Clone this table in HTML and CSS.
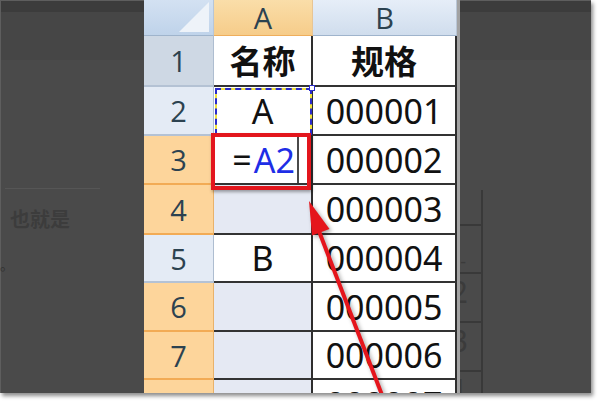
FILE: index.html
```html
<!DOCTYPE html>
<html lang="zh-CN">
<head>
<meta charset="utf-8">
<title>Excel 引用示例</title>
<link rel="stylesheet" href="styles.css">
</head>
<body>
<div class="canvas">
  <div class="photo">
    <div class="left-doc">
      <div class="doc-rule"></div>
      <div class="doc-text">也就是</div>
      <div class="doc-dot">。</div>
    </div>
    <div class="sheet">
      <div class="grid">
        <div class="corner"><span class="corner-tri"></span></div>
        <div class="colh colh-sel">A</div>
        <div class="colh">B</div>

        <div class="rowh rowh-dim">1</div>
        <div class="cell cell-a bold">名称</div>
        <div class="cell cell-b bold">规格</div>

        <div class="rowh">2</div>
        <div class="cell cell-a ants">A<span class="handle"></span></div>
        <div class="cell cell-b">000001</div>

        <div class="rowh rowh-sel">3</div>
        <div class="cell cell-a edit"><span class="eq">=</span><span class="ref">A2</span><span class="caret"></span></div>
        <div class="cell cell-b">000002</div>

        <div class="rowh rowh-sel">4</div>
        <div class="cell cell-a cell-sel"></div>
        <div class="cell cell-b">000003</div>

        <div class="rowh">5</div>
        <div class="cell cell-a">B</div>
        <div class="cell cell-b">000004</div>

        <div class="rowh rowh-sel">6</div>
        <div class="cell cell-a cell-sel"></div>
        <div class="cell cell-b">000005</div>

        <div class="rowh rowh-sel">7</div>
        <div class="cell cell-a cell-sel"></div>
        <div class="cell cell-b">000006</div>

        <div class="rowh rowh-sel">8</div>
        <div class="cell cell-a cell-sel"></div>
        <div class="cell cell-b">000007</div>
      </div>
    </div>
    <div class="right-doc">
      <div class="rtable">
        <div class="rrow rrow-1"></div>
        <div class="rrow rrow-2"><span class="dash">-</span></div>
        <div class="rrow rrow-3">2</div>
        <div class="rrow rrow-4">3</div>
        <div class="rrow rrow-5">1</div>
      </div>
    </div>
    <div class="red-box"></div>
    <svg class="arrow" width="591" height="393" viewBox="0 0 591 393" aria-hidden="true">
      <line x1="382" y1="395" x2="317" y2="226" stroke="#e5151c" stroke-width="4"/>
      <polygon points="309,201 329.5,229 312,235.5" fill="#e5151c"/>
    </svg>
  </div>
</div>
</body>
</html>
```

FILE: styles.css
```css
* {
  box-sizing: border-box;
}

html, body {
  margin: 0;
  padding: 0;
  background: #ffffff;
}

.canvas {
  width: 600px;
  height: 404px;
  background: #ffffff;
  overflow: hidden;
}

.photo {
  position: relative;
  width: 591px;
  height: 393px;
  display: flex;
  overflow: hidden;
  background: linear-gradient(to bottom,
    #5e5e5e 0, #5e5e5e 1px,
    #3c3c3c 1px, #3c3c3c 12px,
    #464646 12px, #464646 60px,
    #4a4a4a 60px);
  box-shadow: inset 1px 0 0 #5e5e5e, 2px 3px 4px rgba(0, 0, 0, 0.45);
}

/* faint document behind, left side */
.left-doc {
  width: 144px;
  flex: none;
  padding-top: 188px;
  display: flex;
  flex-direction: column;
}

.doc-rule {
  margin-left: 5px;
  width: 95px;
  height: 1px;
  background: #565656;
}

.doc-text {
  margin: 18px 0 0 10px;
  font-family: "Noto Sans CJK SC", sans-serif;
  font-weight: 700;
  font-size: 20px;
  line-height: 24px;
  color: #3c3c3c;
}

.doc-dot {
  margin: 26px 0 0 0;
  font-family: "Noto Sans CJK SC", sans-serif;
  font-size: 14px;
  line-height: 14px;
  color: #333333;
}

/* spreadsheet */
.sheet {
  width: 316px;
  flex: none;
  height: 393px;
  overflow: hidden;
  border-right: 3px solid #a2a2a2;
  background: #ffffff;
}

.grid {
  display: grid;
  grid-template-columns: 70px 99px 144px;
  grid-template-rows: 36px 51px 49px 49px 50px 48px 49px 48px 49px;
}

.corner {
  position: relative;
  background: linear-gradient(to bottom, #d3e1f2, #bfd3ea);
  border-right: 1px solid #b7c6d8;
  border-bottom: 1px solid #9fb4cc;
}

.corner-tri {
  position: absolute;
  right: 4px;
  bottom: 3px;
  width: 0;
  height: 0;
  border-left: 30px solid transparent;
  border-bottom: 30px solid #eef3f9;
}

.colh {
  display: flex;
  align-items: center;
  justify-content: center;
  font-family: "Open Sans", "Noto Sans", sans-serif;
  font-size: 29px;
  line-height: 1;
  color: #2c4250;
  background: linear-gradient(to bottom, #e6eef8, #d0dded);
  border-right: 1px solid #b9c6d6;
  border-bottom: 1px solid #9fb4cc;
}

.colh-sel {
  background: linear-gradient(to bottom, #fadea9, #f6cc8a);
  border-bottom-color: #efae5c;
  border-right-color: #e8c594;
}

.rowh {
  display: flex;
  align-items: center;
  justify-content: center;
  font-family: "Open Sans", "Noto Sans", sans-serif;
  font-size: 29px;
  line-height: 1;
  color: #2c4250;
  background: #e4ebf5;
  border-right: 1px solid #aebdd0;
  border-bottom: 2px solid #b4c2d4;
}

.rowh-dim {
  background: #ced8e4;
}

.rowh-sel {
  background: #fdd59b;
  border-bottom-color: #f2ab55;
  border-right-color: #e9b26a;
}

.cell {
  position: relative;
  display: flex;
  align-items: center;
  justify-content: center;
  font-family: "Noto Sans", "Noto Sans CJK SC", sans-serif;
  font-size: 34px;
  line-height: 1;
  color: #111111;
  background: #ffffff;
  border-bottom: 2px solid #333333;
}

.cell-a {
  border-right: 2px solid #2e2e2e;
}

.cell-b {
  border-right: 2px solid #2e2e2e;
}

.cell-sel {
  background: #e5e9f3;
}

.bold {
  font-family: "Noto Sans CJK SC", sans-serif;
  font-weight: 700;
  font-size: 33px;
}

/* marching ants around A2 */
.ants::before,
.ants::after {
  content: "";
  position: absolute;
  left: 1px;
  top: 1px;
  right: -1px;
  bottom: -1px;
  pointer-events: none;
}

.ants::before {
  border: 2px solid #efe23a;
}

.ants::after {
  border: 2px dashed #2b2bcc;
}

.handle {
  position: absolute;
  right: -4px;
  top: -2px;
  width: 6px;
  height: 6px;
  background: #ffffff;
  border: 1px solid #2b2bcc;
  z-index: 1;
}

/* edited cell A3 */
.edit {
  justify-content: flex-end;
  padding-right: 12px;
  font-size: 34px;
}

.eq {
  color: #111111;
  margin-right: 2px;
}

.ref {
  color: #1e2ee6;
}

.caret {
  display: inline-block;
  width: 2px;
  height: 46px;
  margin-left: 2px;
  background: #4a4a4a;
}

/* faint document behind, right side */
.right-doc {
  flex: 1;
  padding-top: 190px;
}

.rtable {
  width: 23px;
  border-right: 2px solid #393939;
}

.rrow {
  overflow: hidden;
  display: flex;
  justify-content: flex-end;
  align-items: flex-start;
  padding-right: 13px;
  font-family: "Noto Sans", sans-serif;
  font-size: 30px;
  line-height: 36px;
  color: #3b3b3b;
  border-bottom: 2px solid #393939;
  white-space: nowrap;
}

.rrow-1 { height: 36px; }
.rrow-2 { height: 48px; align-items: flex-end; }
.rrow-3 { height: 49px; }
.rrow-4 { height: 49px; }
.rrow-5 { height: 49px; border-bottom: none; }

.dash {
  font-size: 18px;
  line-height: 22px;
  padding-right: 2px;
}

/* overlays */
.red-box {
  position: absolute;
  left: 211px;
  top: 133px;
  width: 100px;
  height: 57px;
  border: 4px solid #e3161d;
  box-shadow: 1px 2px 3px rgba(0, 0, 0, 0.35);
  pointer-events: none;
}

.arrow {
  position: absolute;
  left: 0;
  top: 0;
  pointer-events: none;
  filter: drop-shadow(2px 2px 2px rgba(0, 0, 0, 0.35));
}
```
